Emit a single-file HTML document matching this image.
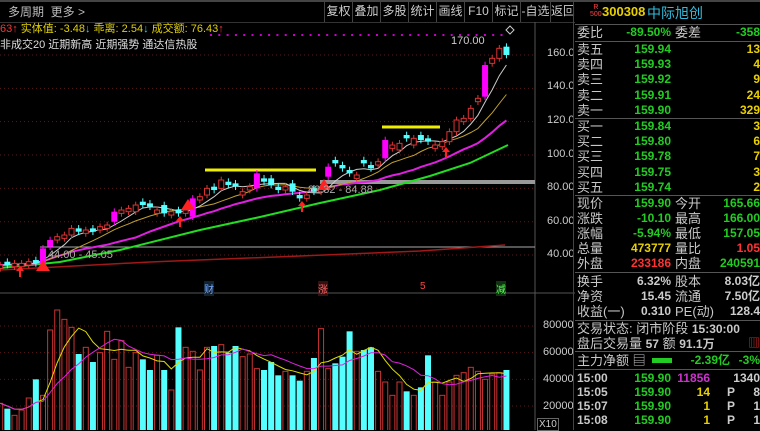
<!DOCTYPE html>
<html><head><meta charset="utf-8"><style>
*{margin:0;padding:0;box-sizing:border-box}
body{width:760px;height:430px;background:#000;overflow:hidden;position:relative;font-family:"Liberation Sans","Noto Sans CJK SC",sans-serif;color:#c8c8c8}
.a{position:absolute;white-space:nowrap}
.tb{position:absolute;top:0;height:22px;border-left:1px solid #444;font-size:12px;line-height:22px;text-align:center;color:#ccc}
.r{position:absolute;left:577px;width:183px;height:15px;font-size:13px;line-height:15px}
.r span{position:absolute;white-space:nowrap}
.l{left:0;color:#c8c8c8}
.v1{right:89px;color:#22cc22;font-weight:bold;font-size:12px}
.l2{left:98px}
.v2{right:0;color:#22cc22;font-weight:bold;font-size:12px}
.sep{position:absolute;left:575px;width:185px;height:1px;background:#555}
</style></head><body>
<div class="a" style="left:0;top:0;width:760px;height:2px;background:#444"></div>
<div class="a" style="left:8px;top:3px;font-size:12px;color:#bbb">多周期 &nbsp;更多 &gt;</div>
<div class="tb" style="left:324px;width:28px">复权</div>
<div class="tb" style="left:352px;width:28px">叠加</div>
<div class="tb" style="left:380px;width:28px">多股</div>
<div class="tb" style="left:408px;width:28px">统计</div>
<div class="tb" style="left:436px;width:28px">画线</div>
<div class="tb" style="left:464px;width:28px">F10</div>
<div class="tb" style="left:492px;width:28px">标记</div>
<div class="tb" style="left:520px;width:30px">-自选</div>
<div class="tb" style="left:550px;width:25px;overflow:hidden">返回</div>
<div class="a" style="left:0;top:22px;width:575px;height:1px;background:#333"></div>
<div class="a" style="left:0;top:20px;font-size:11px;color:#e0d000"><span style="color:#f33">63↑</span> 实体值: -3.48<span style="color:#3cf">↓</span> 乖离: 2.54<span style="color:#3cf">↓</span> 成交额: 76.43<span style="color:#f33">↑</span></div>
<div class="a" style="left:0;top:36px;font-size:11px;color:#ddd">非成交20 近期新高 近期强势 通达信热股</div>
<div class="a" style="left:451px;top:35px;font-size:11px;color:#ccc">170.00</div>
<svg class="a" style="left:0;top:0" width="575" height="430" id="ch"></svg>
<div class="a" style="left:547px;top:47px;font-size:11px;color:#ccc">160.0</div>
<div class="a" style="left:547px;top:80px;font-size:11px;color:#ccc">140.0</div>
<div class="a" style="left:547px;top:114px;font-size:11px;color:#ccc">120.0</div>
<div class="a" style="left:547px;top:148px;font-size:11px;color:#ccc">100.0</div>
<div class="a" style="left:547px;top:181px;font-size:11px;color:#ccc">80.00</div>
<div class="a" style="left:547px;top:215px;font-size:11px;color:#ccc">60.00</div>
<div class="a" style="left:547px;top:248px;font-size:11px;color:#ccc">40.00</div>
<div class="a" style="left:543px;top:319px;font-size:11px;color:#ccc">80000</div>
<div class="a" style="left:543px;top:346px;font-size:11px;color:#ccc">60000</div>
<div class="a" style="left:543px;top:373px;font-size:11px;color:#ccc">40000</div>
<div class="a" style="left:543px;top:400px;font-size:11px;color:#ccc">20000</div>
<div class="a" style="left:537px;top:418px;font-size:10px;color:#ccc;border:1px solid #666;padding:0 1px">X10</div>
<div class="a" style="left:48px;top:249px;font-size:11px;color:#aaa">44.00 - 45.05</div>
<div class="a" style="left:308px;top:184px;font-size:11px;color:#aaa">82.32 - 84.88</div>
<div class="a" style="left:204px;top:281px;font-size:10px;color:#7af;background:#123">财</div>
<div class="a" style="left:318px;top:281px;font-size:10px;color:#f66;background:#311">涨</div>
<div class="a" style="left:420px;top:281px;font-size:10px;color:#f44">5</div>
<div class="a" style="left:496px;top:281px;font-size:10px;color:#5f5;background:#131">减</div>

<div class="a" style="left:573px;top:0;width:1px;height:430px;background:#444"></div>
<div class="a" style="left:590px;top:4px;font-size:7px;line-height:7px;color:#f44;text-align:center">R<br>500</div>
<div class="a" style="left:602px;top:4px;font-size:13px;font-weight:bold;color:#e8d000">300308</div>
<div class="a" style="left:647px;top:3px;font-size:14px;color:#3bd">中际旭创</div>
<div class="sep" style="top:24px"></div>
<div class="r" style="top:25px"><span class="l">委比</span><span class="v1">-89.50%</span><span class="l2">委差</span><span class="v2">-358</span></div>
<div class="sep" style="top:41px"></div>
<div class="r" style="top:42px"><span class="l">卖五</span><span class="v1">159.94</span><span class="v2" style="color:#e8d000">13</span></div>
<div class="r" style="top:57px"><span class="l">卖四</span><span class="v1">159.93</span><span class="v2" style="color:#e8d000">4</span></div>
<div class="r" style="top:72px"><span class="l">卖三</span><span class="v1">159.92</span><span class="v2" style="color:#e8d000">9</span></div>
<div class="r" style="top:88px"><span class="l">卖二</span><span class="v1">159.91</span><span class="v2" style="color:#e8d000">24</span></div>
<div class="r" style="top:103px"><span class="l">卖一</span><span class="v1">159.90</span><span class="v2" style="color:#e8d000">329</span></div>
<div class="sep" style="top:118px"></div>
<div class="r" style="top:119px"><span class="l">买一</span><span class="v1">159.84</span><span class="v2" style="color:#e8d000">3</span></div>
<div class="r" style="top:134px"><span class="l">买二</span><span class="v1">159.80</span><span class="v2" style="color:#e8d000">6</span></div>
<div class="r" style="top:149px"><span class="l">买三</span><span class="v1">159.78</span><span class="v2" style="color:#e8d000">7</span></div>
<div class="r" style="top:165px"><span class="l">买四</span><span class="v1">159.75</span><span class="v2" style="color:#e8d000">3</span></div>
<div class="r" style="top:180px"><span class="l">买五</span><span class="v1">159.74</span><span class="v2" style="color:#e8d000">2</span></div>
<div class="sep" style="top:195px"></div>
<div class="r" style="top:196px"><span class="l">现价</span><span class="v1">159.90</span><span class="l2">今开</span><span class="v2">165.66</span></div>
<div class="r" style="top:211px"><span class="l">涨跌</span><span class="v1">-10.10</span><span class="l2">最高</span><span class="v2">166.00</span></div>
<div class="r" style="top:226px"><span class="l">涨幅</span><span class="v1">-5.94%</span><span class="l2">最低</span><span class="v2">157.05</span></div>
<div class="r" style="top:241px"><span class="l">总量</span><span class="v1" style="color:#e8d000">473777</span><span class="l2">量比</span><span class="v2" style="color:#f33">1.05</span></div>
<div class="r" style="top:256px"><span class="l">外盘</span><span class="v1" style="color:#f33">233186</span><span class="l2">内盘</span><span class="v2">240591</span></div>
<div class="sep" style="top:272px"></div>
<div class="r" style="top:274px"><span class="l">换手</span><span class="v1" style="color:#ccc">6.32%</span><span class="l2">股本</span><span class="v2" style="color:#ccc">8.03亿</span></div>
<div class="r" style="top:289px"><span class="l">净资</span><span class="v1" style="color:#ccc">15.45</span><span class="l2">流通</span><span class="v2" style="color:#ccc">7.50亿</span></div>
<div class="r" style="top:304px"><span class="l">收益(一)</span><span class="v1" style="color:#ccc">0.310</span><span class="l2">PE(动)</span><span class="v2" style="color:#ccc">128.4</span></div>
<div class="sep" style="top:320px"></div>
<div class="r" style="top:321px"><span class="l">交易状态: 闭市阶段 <b style="font-size:12px">15:30:00</b></span></div>
<div class="r" style="top:336px"><span class="l">盘后交易量 <b style="font-size:12px">57</b> 额 <b style="font-size:12px">91.1万</b></span><span class="v2" style="color:#c22">▥</span></div>
<div class="sep" style="top:351px"></div>
<div class="r" style="top:353px"><span class="l">主力净额 ▤</span><span style="left:75px;top:5px;width:20px;height:5px;background:#2c2"></span><span class="v1" style="right:30px">-2.39亿</span><span class="v2">-3%</span></div>
<div class="sep" style="top:369px"></div>
<div class="r" style="top:371px;font-size:12px;font-weight:bold"><span class="l">15:00</span><span class="v1">159.90</span><span style="right:50px;color:#c3c">11856</span><span style="right:0;color:#ccc">1340</span></div>
<div class="r" style="top:385px;font-size:12px;font-weight:bold"><span class="l">15:05</span><span class="v1">159.90</span><span style="right:50px;color:#e8d000">14</span><span style="right:25px;color:#ccc">P</span><span style="right:0;color:#ccc">8</span></div>
<div class="r" style="top:399px;font-size:12px;font-weight:bold"><span class="l">15:07</span><span class="v1">159.90</span><span style="right:50px;color:#e8d000">1</span><span style="right:25px;color:#ccc">P</span><span style="right:0;color:#ccc">1</span></div>
<div class="r" style="top:413px;font-size:12px;font-weight:bold"><span class="l">15:08</span><span class="v1">159.90</span><span style="right:50px;color:#e8d000">1</span><span style="right:25px;color:#ccc">P</span><span style="right:0;color:#ccc">1</span></div>

<script>
var C=[[34,'r'],[34,'c'],[35,'r'],[35,'r'],[36,'r'],[35,'c'],[44,'m',35],[49,'m',45],[51,'r'],[52,'r'],[56,'r',52],[54,'c'],[55,'r'],[54,'c'],[57,'r'],[58,'r'],[66,'m',60],[67,'r'],[68,'r'],[70,'r',66],[70,'c'],[69,'c'],[67,'r'],[65,'c',70],[66,'r'],[65,'c'],[67,'r'],[74,'m',63],[75,'r'],[80,'r',76],[79,'c'],[85,'r',80],[82,'c'],[81,'c'],[78,'r'],[81,'r'],[89,'m',80],[84,'c'],[82,'c',86],[79,'c'],[81,'r'],[78,'c',83],[74,'c'],[76,'r',74],[78,'c'],[80,'r'],[93,'m',87],[95,'c'],[92,'c'],[89,'c'],[88,'r',86],[95,'c'],[92,'c'],[96,'r'],[109,'m',98],[106,'r'],[107,'r',103],[110,'c'],[106,'r',110],[112,'c',109],[108,'c'],[106,'r'],[108,'r',105],[114,'r',108],[121,'r',114],[122,'r'],[128,'r',122],[134,'r'],[154,'m',135],[158,'r',155],[164,'r',158],[160,'c',165]];
var V=[22,18,13,17,26,40,28,77,92,85,79,59,64,53,60,76,55,69,49,60,55,47,58,47,32,79,64,61,47,64,65,66,60,65,57,59,48,47,53,43,46,43,39,46,56,78,48,52,57,76,61,62,64,46,38,28,38,31,28,34,58,38,28,38,43,45,49,46,40,44,45,47];
function Y(p){return 55+(160-p)*1.667}
function VY(v){return 326+(80-v)*80/60}
var s='',X=function(i){return 43+(i-6)*7.13};
[40,60,80,100,120,140,160].forEach(function(p){s+='<line x1="0" x2="535" y1="'+Y(p)+'" y2="'+Y(p)+'" stroke="#5a1a1a" stroke-dasharray="1,3"/>'});
[20,40,60,80].forEach(function(v){s+='<line x1="0" x2="535" y1="'+VY(v)+'" y2="'+VY(v)+'" stroke="#5a1a1a" stroke-dasharray="1,3"/>'});
s+='<line x1="535" x2="535" y1="22" y2="430" stroke="#555"/><line x1="0" x2="575" y1="293" y2="293" stroke="#555"/>';
s+='<line x1="40" x2="535" y1="247" y2="247" stroke="#aaa"/><line x1="320" x2="535" y1="182" y2="182" stroke="#999" stroke-width="4"/>';
s+='<line x1="205" x2="316" y1="170" y2="170" stroke="#ee0" stroke-width="3"/><line x1="382" x2="440" y1="127" y2="127" stroke="#ee0" stroke-width="3"/>';
for(var x=210;x<505;x+=8.3){s+='<rect x="'+x+'" y="34" width="2" height="2" fill="#c0c"/>'}
s+='<polyline fill="none" stroke="#a01818" stroke-width="1.5" points="0,270 150,262 300,256 420,251 505,245"/>';
s+='<polyline fill="none" stroke="#2d2" stroke-width="2" points="0,268 60,262 120,250 200,230 260,217 320,203 380,190 430,176 470,163 508,145"/>';
var cl=C.map(function(c){return c[0]});
function ma(n,col,w){var p=[];for(var i=0;i<cl.length;i++){var a=0,k=0;for(var j=Math.max(0,i-n+1);j<=i;j++){a+=cl[j];k++}p.push(X(i).toFixed(1)+','+Y(a/k).toFixed(1))}s+='<polyline fill="none" stroke="'+col+'" stroke-width="'+w+'" points="'+p.join(' ')+'"/>'}
ma(20,'#e020e0',2);ma(10,'#c0a030',1);ma(5,'#ccc',1);
C.forEach(function(c,i){var cx=X(i),o=c[2]!==undefined?c[2]:(c[1]=='c'?c[0]+2:c[0]-2),hi=Math.max(o,c[0])+2,lo=Math.min(o,c[0])-2;
var col=c[1]=='m'?'#f0f':c[1]=='c'?'#5ff':'#d33';
s+='<line x1="'+cx+'" x2="'+cx+'" y1="'+Y(hi)+'" y2="'+Y(lo)+'" stroke="'+col+'"/>';
var t=Y(Math.max(o,c[0])),h=Math.max(1,Y(Math.min(o,c[0]))-t);
if(c[1]=='r')s+='<rect x="'+(cx-2.5)+'" y="'+t+'" width="5" height="'+h+'" fill="#000" stroke="#d33"/>';
else s+='<rect x="'+(cx-3)+'" y="'+t+'" width="6" height="'+h+'" fill="'+col+'"/>';
var v=V[i]||40,vc=c[1]=='c';
if(vc)s+='<rect x="'+(cx-3)+'" y="'+VY(v)+'" width="6" height="'+(432-VY(v))+'" fill="#5ff"/>';
else s+='<rect x="'+(cx-2.5)+'" y="'+VY(v)+'" width="5" height="'+(432-VY(v))+'" fill="none" stroke="#c33"/>';});
function vma(n,col){var p=[];for(var i=0;i<V.length;i++){var a=0,k=0;for(var j=Math.max(0,i-n+1);j<=i;j++){a+=V[j];k++}p.push(X(i).toFixed(1)+','+VY(a/k).toFixed(1))}s+='<polyline fill="none" stroke="'+col+'" points="'+p.join(' ')+'"/>'}
vma(5,'#dd0');vma(10,'#d2d');
[[43,266],[188,205],[324,185]].forEach(function(t){s+='<polygon points="'+(t[0]-7)+','+(t[1]+5)+' '+(t[0]+7)+','+(t[1]+5)+' '+t[0]+','+(t[1]-6)+'" fill="#f22"/>'});
[[20,272],[180,222],[302,207],[446,153]].forEach(function(t){s+='<polygon points="'+t[0]+','+(t[1]-6)+' '+(t[0]-4)+','+(t[1]-1)+' '+(t[0]-1)+','+(t[1]-1)+' '+(t[0]-1)+','+(t[1]+5)+' '+(t[0]+1)+','+(t[1]+5)+' '+(t[0]+1)+','+(t[1]-1)+' '+(t[0]+4)+','+(t[1]-1)+'" fill="#f22"/>'});
s+='<polygon points="210,26 214,30 210,34 206,30" fill="none" stroke="#ccc" transform="translate(300,0)"/>';
document.getElementById('ch').innerHTML=s;
</script>
</body></html>
